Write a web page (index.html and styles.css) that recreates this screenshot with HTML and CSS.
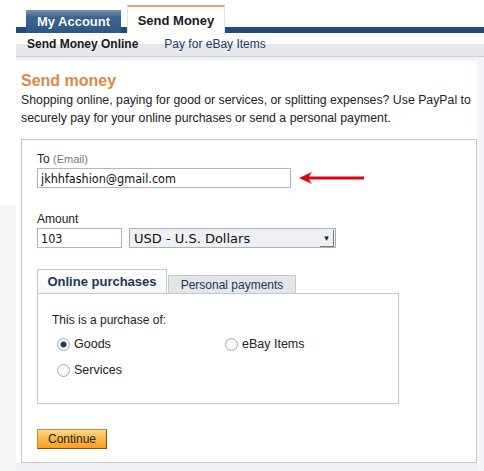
FILE: index.html
```html
<!DOCTYPE html>
<html>
<head>
    <link rel="stylesheet" href="styles.css">
</head>
<body>
    <div class="page">
        <div class="header">
            <a href="#" class="tab">My Account</a>
            <a href="#" class="tab tab-active">Send Money</a>
        </div>
        <div class="subnav">
            <span class="subnav-current">Send Money Online</span>
            <a href="#" class="subnav-link">Pay for eBay Items</a>
        </div>

        <div class="main">
            <h1>Send money</h1>
            <p class="intro">Shopping online, paying for good or services, or splitting expenses? Use PayPal to securely pay for your online purchases or send a personal payment.</p>

            <form class="box">
                <label class="field-label">To <span class="hint">(Email)</span></label>
                <div class="row">
                    <input type="text" class="input input-email" value="jkhhfashion@gmail.com">
                    <svg class="arrow" width="68" height="14" viewBox="0 0 68 14">
                        <path d="M6 7 H66" stroke="#e00012" stroke-width="3"/>
                        <path d="M1 7 L14 1 L10 7 L14 13 Z" fill="#e00012"/>
                    </svg>
                </div>

                <label class="field-label label-amount">Amount</label>
                <div class="row">
                    <input type="text" class="input input-amount" value="103">
                    <div class="select">
                        <span>USD - U.S. Dollars</span>
                        <span class="select-btn">&#9662;</span>
                    </div>
                </div>

                <div class="ptabs">
                    <div class="ptab ptab-active">Online purchases</div>
                    <div class="ptab">Personal payments</div>
                </div>
                <div class="panel">
                    <div class="panel-title">This is a purchase of:</div>
                    <div class="options">
                        <label class="option"><input type="radio" name="kind" checked> Goods</label>
                        <label class="option"><input type="radio" name="kind"> eBay Items</label>
                        <label class="option"><input type="radio" name="kind"> Services</label>
                    </div>
                </div>

                <button type="button" class="btn">Continue</button>
            </form>
        </div>
    </div>
</body>
</html>
```

FILE: styles.css
```css
/* General */
body {
    margin: 0;
    background: linear-gradient(#ffffff 205px, #f6f7f9 205px);
    font-family: 'Liberation Sans', Arial, sans-serif;
    color: #222;
}

.page {
    margin-left: 16px;
}

/* Top tabs */
.header {
    height: 33px;
    display: flex;
    align-items: flex-end;
    gap: 6px;
    padding-left: 10px;
    background: linear-gradient(#ffffff 27px, #214c79 27px);
}

.tab {
    display: block;
    box-sizing: border-box;
    height: 23px;
    width: 95px;
    padding-top: 4px;
    text-align: center;
    font-size: 13px;
    font-weight: bold;
    color: #ffffff;
    text-decoration: none;
    text-shadow: 0 0 1px #1c3a5c;
    background: linear-gradient(#7793b3, #3d6590 30%, #2c5785);
}

.tab-active {
    height: 28px;
    width: 98px;
    padding-top: 6px;
    color: #1a1a1a;
    text-shadow: none;
    background: #ffffff;
    border-top: 2px solid #d9a27a;
    border-left: 1px solid #e4e4e4;
    border-right: 1px solid #e4e4e4;
}

/* Sub navigation */
.subnav {
    height: 24px;
    box-sizing: border-box;
    padding: 4px 0 0 11px;
    display: flex;
    gap: 26px;
    font-size: 12px;
    background: linear-gradient(#fdfdf9 50%, #e6e8eb 50%);
    border-bottom: 1px solid #cdd1d6;
}

.subnav-current {
    font-weight: bold;
    color: #1a1a1a;
}

.subnav-link {
    color: #1e3a66;
    text-decoration: none;
}

/* Main content */
.main {
    padding: 4px 7px 9px 5px;
    border-top: 4px solid #f0f2f5;
    background:
        linear-gradient(to right, transparent calc(100% - 7px), #f3f4f7 calc(100% - 7px)),
        linear-gradient(#ffffff calc(100% - 9px), #eef0f4 calc(100% - 9px));
}

h1 {
    margin: 6px 0 0;
    font-size: 16px;
    font-weight: bold;
    color: #d98a46;
    line-height: 20px;
}

.intro {
    margin: 0 0 12px;
    font-size: 12.3px;
    line-height: 18px;
    color: #222;
}

/* Form box */
.box {
    border: 1px solid #c5c9ce;
    background: #ffffff;
    padding: 11px 15px 13px 15px;
    display: flex;
    flex-direction: column;
    align-items: flex-start;
}

.field-label {
    font-size: 12px;
    line-height: 16px;
    color: #222;
}

.hint {
    font-size: 11px;
    color: #777;
}

.label-amount {
    margin-top: 23px;
}

.row {
    display: flex;
    align-items: center;
    gap: 7px;
    margin-top: 1px;
}

.input {
    box-sizing: border-box;
    height: 20px;
    margin: 0;
    padding: 1px 3px;
    border: 1px solid #a7b8c7;
    font-family: 'DejaVu Sans Condensed', 'DejaVu Sans', sans-serif;
    font-size: 12.5px;
    color: #111;
    outline: none;
}

.input-email {
    width: 254px;
}

.input-amount {
    width: 85px;
}

.select {
    box-sizing: border-box;
    width: 207px;
    height: 20px;
    display: flex;
    align-items: center;
    justify-content: space-between;
    padding-left: 4px;
    border: 1px solid #a9b1b9;
    background: #eef0f3;
    font-family: 'DejaVu Sans', sans-serif;
    font-size: 13px;
    color: #111;
}

.select-btn {
    width: 13px;
    height: 16px;
    margin-right: 1px;
    font-size: 9px;
    line-height: 16px;
    text-align: center;
    color: #222;
    border-right: 1px solid #777;
    border-bottom: 1px solid #777;
}

/* Payment tabs */
.ptabs {
    display: flex;
    align-items: flex-end;
    gap: 1px;
    margin-top: 21px;
    margin-bottom: -1px;
}

.ptab {
    box-sizing: border-box;
    height: 19px;
    width: 128px;
    padding-top: 2px;
    text-align: center;
    font-size: 12px;
    color: #1d3557;
    background: #e3e6e9;
    border: 1px solid #c5c9ce;
    border-bottom: none;
}

.ptab-active {
    height: 25px;
    width: 130px;
    padding-top: 4px;
    font-size: 13px;
    font-weight: bold;
    background: linear-gradient(#ffffff, #f6f7f8);
}

.panel {
    box-sizing: border-box;
    width: 362px;
    height: 111px;
    border: 1px solid #c5c9ce;
    padding: 18px 14px 0;
}

.panel-title {
    font-size: 12px;
    line-height: 16px;
}

.options {
    display: grid;
    grid-template-columns: 168px auto;
    row-gap: 10px;
    margin-top: 8px;
    padding-left: 5px;
}

.option {
    display: flex;
    align-items: center;
    gap: 4px;
    font-size: 12.5px;
    line-height: 16px;
    color: #222;
}

.option input {
    appearance: none;
    margin: 0;
    width: 13px;
    height: 13px;
    border-radius: 50%;
    border: 1px solid #a3abb3;
    background: radial-gradient(#ffffff, #eef0f2);
}

.option input:checked {
    background: radial-gradient(#1d3a66 2.5px, #ffffff 3.5px, #eef0f2);
}

/* Button */
.btn {
    margin-top: 25px;
    width: 70px;
    height: 20px;
    padding: 0;
    font-family: 'Liberation Sans', Arial, sans-serif;
    font-size: 12px;
    color: #222;
    background: linear-gradient(#ffd88a, #fbb449 50%, #f7a01c);
    border: 1px solid #c88a35;
    border-right-color: #7a5220;
    border-bottom-color: #7a5220;
    cursor: pointer;
}
```
